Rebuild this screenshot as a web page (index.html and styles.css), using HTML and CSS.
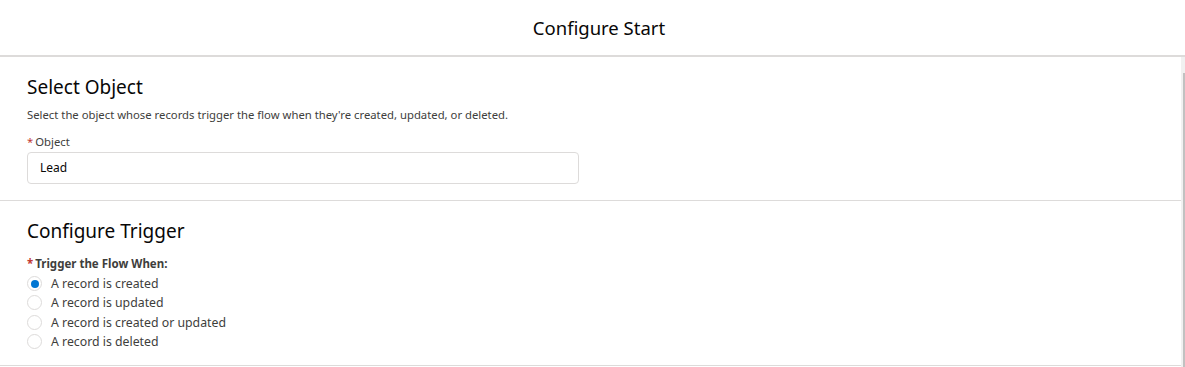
FILE: index.html
```html
<!DOCTYPE html>
<html lang="en">
<head>
  <meta charset="UTF-8">
  <title>Configure Start</title>
  <link rel="stylesheet" href="styles.css">
</head>
<body>
  <div class="modal">
    <header class="modal-header">
      <h1>Configure Start</h1>
    </header>

    <div class="modal-body">
      <div class="content">
        <section class="section">
          <h2>Select Object</h2>
          <p class="help">Select the object whose records trigger the flow when they're created, updated, or deleted.</p>
          <label class="field-label"><abbr class="required">*</abbr>Object</label>
          <div class="input">Lead</div>
        </section>

        <section class="section">
          <h2>Configure Trigger</h2>
          <div class="group-label"><abbr class="required">*</abbr>Trigger the Flow When:</div>
          <ul class="radio-list">
            <li class="radio checked"><span class="faux"></span>A record is created</li>
            <li class="radio"><span class="faux"></span>A record is updated</li>
            <li class="radio"><span class="faux"></span>A record is created or updated</li>
            <li class="radio"><span class="faux"></span>A record is deleted</li>
          </ul>
        </section>
      </div>
      <div class="scrollbar"><div class="thumb"></div></div>
    </div>
  </div>
</body>
</html>
```

FILE: styles.css
```css
* {
  box-sizing: border-box;
  margin: 0;
  padding: 0;
}

body {
  font-family: "Noto Sans", "Open Sans", sans-serif;
  background: #fff;
  color: #080707;
  width: 1185px;
  height: 367px;
  overflow: hidden;
}

.modal-header {
  height: 57px;
  border-bottom: 2px solid #dddbda;
  display: flex;
  align-items: center;
  justify-content: center;
  padding-left: 13px;
}

.modal-header h1 {
  font-size: 18.5px;
  font-weight: 400;
  line-height: 1.25;
  padding-top: 1px;
}

.modal-body {
  display: flex;
}

.content {
  flex: 1;
}

.section {
  border-bottom: 1px solid #dddbda;
  padding: 18px 27px 0;
}

.section:first-child {
  height: 144px;
}

.section:last-child {
  height: 165px;
}

.section h2 {
  font-size: 19px;
  font-weight: 400;
  line-height: 25px;
  margin-bottom: 7px;
}

.help {
  font-size: 11.3px;
  color: #3e3e3c;
  line-height: 16px;
  margin-bottom: 11px;
}

.field-label {
  display: block;
  font-size: 11.3px;
  color: #3e3e3c;
  line-height: 16px;
  margin-bottom: 2px;
}

.required {
  color: #c23934;
  text-decoration: none;
  margin-right: 2px;
}

.input {
  width: 552px;
  height: 32px;
  border: 1px solid #dddbda;
  border-radius: 4px;
  padding: 0 12px;
  font-size: 12px;
  line-height: 30px;
}

.section:last-child h2 {
  margin-bottom: 12px;
}

.group-label {
  font-size: 11.5px;
  font-weight: 700;
  color: #3e3e3c;
  line-height: 16px;
  margin-bottom: 2px;
}

.radio-list {
  list-style: none;
}

.radio {
  display: flex;
  align-items: center;
  height: 19.33px;
  font-size: 12.3px;
  color: #3e3e3c;
}

.faux {
  width: 15px;
  height: 15px;
  border: 1px solid #dddbda;
  border-radius: 50%;
  margin-right: 9px;
  display: flex;
  align-items: center;
  justify-content: center;
}

.radio.checked .faux::after {
  content: "";
  width: 8px;
  height: 8px;
  border-radius: 50%;
  background: #0176d3;
}

.scrollbar {
  width: 4px;
  background: #f1f1f1;
  padding-top: 16px;
  display: flex;
  justify-content: flex-end;
}

.thumb {
  width: 2px;
  height: 300px;
  background: #c1c1c1;
}
```
